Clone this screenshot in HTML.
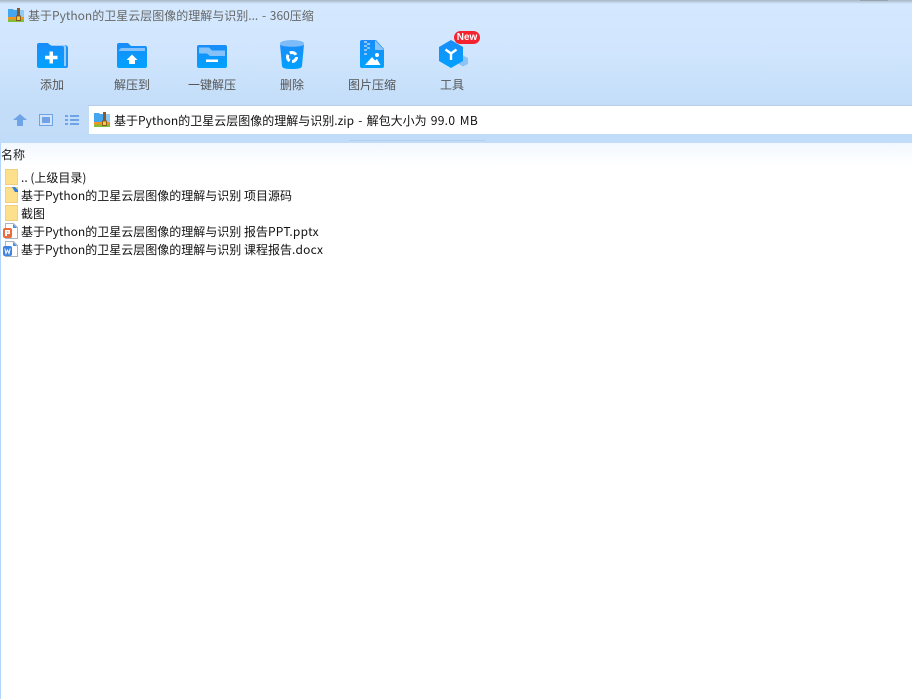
<!DOCTYPE html>
<html lang="zh"><head><meta charset="utf-8"><title>360压缩</title>
<style>
html,body{margin:0;padding:0;background:#fff}
body{width:912px;height:699px;position:relative;overflow:hidden;font:12px/16px "Noto Sans CJK SC","Liberation Sans",sans-serif;color:#111}
.a{position:absolute;white-space:nowrap}
.lbl{position:absolute;top:77px;width:80px;text-align:center;color:#555;line-height:16px}
svg{position:absolute;overflow:visible}
.row{position:absolute;left:21px;white-space:nowrap;line-height:18px}
</style></head><body>
<div class="a" style="left:0;top:0;width:912px;height:143px;background:linear-gradient(#d4e9ff 0,#d1e6fe 50px,#c3ddf8 105px)"></div>
<div class="a" style="left:0;top:0;width:912px;height:4px;background:linear-gradient(#a8b6c4,#d4e9ff)"></div>
<div class="a" style="left:860px;top:0;width:28px;height:1px;background:#98a5b1"></div>
<div class="a" style="left:0;top:134px;width:912px;height:9px;background:#c1dcf8"></div>
<div class="a" style="left:349px;top:140px;width:136px;height:1px;background:#b4cfeb"></div>
<div class="a" style="left:88px;top:105px;width:824px;height:1px;background:#b5cfe9"></div>
<div class="a" style="left:89px;top:106px;width:823px;height:28px;background:#fff"></div>
<div class="a" style="left:1px;top:143px;width:911px;height:24px;background:linear-gradient(#f2f8ff,#fff)"></div>
<div class="a" style="left:0;top:143px;width:1px;height:556px;background:#b5d6fb"></div>

<svg style="left:8px;top:8px" width="16" height="14" viewBox="0 0 16 14"><path d="M0 1h5l1 1h5v7H0z" fill="#45a6f0"/><path d="M11 2h5v7h-5z" fill="#8fcaf5"/><path d="M0 9h16v2.500H0z" fill="#f39420"/><path d="M0 11.500h16V14H0z" fill="#84bd3c"/><path d="M9 0h3v13H9z" fill="#8a5a2a"/><rect x="8.500" y="8" width="4" height="4.500" fill="#f5c940" stroke="#7a4a1a" stroke-width=".8"/></svg>
<div class="a" style="left:28px;top:8px;color:#666;line-height:16px;word-spacing:1px">基于Python的卫星云层图像的理解与识别... - 360压缩</div>

<svg style="left:37px;top:43px" width="31" height="25" viewBox="0 0 31 25"><defs><linearGradient id="g" x1="0" y1="0" x2="0" y2="1"><stop offset="0" stop-color="#1a8cfa"/><stop offset="1" stop-color="#00a2ff"/></linearGradient></defs><path d="M12 2h16a3 3 0 0 1 3 3v18a2 2 0 0 1-2 2h-5z" fill="#1a94fb"/><path d="M14 2h13a2 2 0 0 1 2 2v19h-2V4H14z" fill="#9ccdfa"/><path d="M2 0h9l3 3h11a2 2 0 0 1 2 2v18a2 2 0 0 1-2 2H2a2 2 0 0 1-2-2V2a2 2 0 0 1 2-2z" fill="url(#g)"/><path d="M12.500 8.500h3.500v4.300h4.500v3.400H16v4.300h-3.500v-4.300H8v-3.400h4.500z" fill="#fff"/></svg>
<div class="lbl" style="left:12px">添加</div>

<svg style="left:117px;top:43px" width="30" height="25" viewBox="0 0 30 25"><path d="M2 0h9l3 3h14a2 2 0 0 1 2 2v18a2 2 0 0 1-2 2H2a2 2 0 0 1-2-2V2a2 2 0 0 1 2-2z" fill="url(#g)"/><path d="M2 8a3 3 0 0 1 3-3h23v3z" fill="#86c2fa"/><path d="M15 11.500l5.500 5.500H18v4h-6v-4H9.500z" fill="#fff"/></svg>
<div class="lbl" style="left:92px">解压到</div>

<svg style="left:197px;top:45px" width="30" height="23" viewBox="0 0 30 23"><path d="M2 0h26a2 2 0 0 1 2 2v19a2 2 0 0 1-2 2H2a2 2 0 0 1-2-2V2a2 2 0 0 1 2-2z" fill="url(#g)"/><path d="M2 2.500h10l3 3h13V11H13L10 8.500H2z" fill="#86c2fa"/><path d="M9 14.500h12v2.500H9z" fill="#fff"/></svg>
<div class="lbl" style="left:172px">一键解压</div>

<svg style="left:280px;top:40px" width="24" height="29" viewBox="0 0 24 29"><ellipse cx="12" cy="3.500" rx="12" ry="3.500" fill="#7dbcf8"/><path d="M0 4.500c3 3 21 3 24 0l-2 21.500c-.2 2-3 3-10 3s-9.800-1-10-3z" fill="url(#g)"/><circle cx="12" cy="17" r="4.500" fill="none" stroke="#fff" stroke-width="3" stroke-dasharray="7 2.400"/></svg>
<div class="lbl" style="left:252px">删除</div>

<svg style="left:360px;top:40px" width="24" height="28" viewBox="0 0 24 28"><path d="M2 0h14l8 9v17a2 2 0 0 1-2 2H2a2 2 0 0 1-2-2V2a2 2 0 0 1 2-2z" fill="url(#g)"/><path d="M15 0l9 10h-9z" fill="#8cc4f8"/><path d="M4 1h3v2H4zM7 3h3v2H7zM4 5h3v2H4zM7 7h3v2H7zM4 9h3v2H4zM4 13h3v2H4z" fill="#8cc4f8"/><circle cx="17" cy="15" r="2" fill="#fff"/><path d="M5 25l7-8 3 3.500 2-1.500 3.500 6z" fill="#fff"/></svg>
<div class="lbl" style="left:332px">图片压缩</div>

<svg style="left:439px;top:40px" width="29" height="28" viewBox="0 0 29 28"><path d="M23 15l6 3v6l-5 2.500-5-3z" fill="#8cc4f8"/><path d="M12 0L24 7v14l-12 7L0 21V7z" fill="url(#g)"/><path d="M6.500 9.500l5.500 4 5.500-4M12 13.500V20" fill="none" stroke="#fff" stroke-width="2.400"/></svg>
<div class="a" style="left:454px;top:31px;width:26px;height:13px;border-radius:7px;background:#f5222f;color:#fff;font:bold 10px/13px 'Liberation Sans',sans-serif;text-align:center">New</div>
<div class="lbl" style="left:412px">工具</div>

<svg style="left:13px;top:114px" width="14" height="12" viewBox="0 0 14 12"><path d="M7 0l7 6h-4v6H4V6H0z" fill="#6ea4e6"/></svg>
<svg style="left:39px;top:114px" width="14" height="12" viewBox="0 0 14 12"><rect x=".5" y=".5" width="13" height="11" fill="#d2e4f9" stroke="#6ea4e6"/><rect x="3" y="3" width="8" height="6" fill="#6ea4e6"/></svg>
<svg style="left:65px;top:115px" width="14" height="10" viewBox="0 0 14 10"><path d="M0 0h3v2H0zM5 0h9v2H5zM0 4h3v2H0zM5 4h9v2H5zM0 8h3v2H0zM5 8h9v2H5z" fill="#6ea4e6"/></svg>

<svg style="left:94px;top:112px" width="16" height="15" viewBox="0 0 16 15"><path d="M0 1h5l1 1h5v8H0z" fill="#45a6f0"/><path d="M11 2h5v8h-5z" fill="#8fcaf5"/><path d="M0 10h16v2.500H0z" fill="#f39420"/><path d="M0 12.500h16V15H0z" fill="#84bd3c"/><path d="M9 0h3v14H9z" fill="#8a5a2a"/><rect x="8.500" y="9" width="4" height="4.500" fill="#f5c940" stroke="#7a4a1a" stroke-width=".8"/></svg>
<div class="a" style="left:114px;top:113px;color:#111;line-height:16px;word-spacing:1.500px">基于Python的卫星云层图像的理解与识别.zip - 解包大小为 <span style="letter-spacing:.3px">99.0 MB</span></div>

<div class="a" style="left:1px;top:147px;line-height:16px;color:#222">名称</div>

<svg style="left:5px;top:169px" width="13" height="16" viewBox="0 0 13 16"><rect x=".5" y=".5" width="12" height="15" fill="#fde08c" stroke="#f2cf80"/></svg>
<div class="row" style="top:169px">.. (上级目录)</div>
<svg style="left:5px;top:187px" width="13" height="16" viewBox="0 0 13 16"><rect x=".5" y=".5" width="12" height="15" fill="#fde08c" stroke="#f2cf80"/><path d="M7 0h3l3 3v2h-3z" fill="#2f80d8"/></svg>
<div class="row" style="top:187px">基于Python的卫星云层图像的理解与识别 项目源码</div>
<svg style="left:5px;top:205px" width="13" height="16" viewBox="0 0 13 16"><rect x=".5" y=".5" width="12" height="15" fill="#fde08c" stroke="#f2cf80"/></svg>
<div class="row" style="top:205px">截图</div>
<svg style="left:2px;top:223px" width="16" height="16" viewBox="0 0 16 16"><path d="M3.500.5h8l4 4v11h-12z" fill="#fff" stroke="#a9b4c2"/><path d="M11 1l4 4h-4z" fill="#4a90e0"/><rect x="1" y="5" width="9" height="10" rx="2" fill="#ec6a3c"/><path d="M3 7h5v4H5v2H3zM5 8.500v1h1.500v-1z" fill="#fff"/></svg>
<div class="row" style="top:223px">基于Python的卫星云层图像的理解与识别 报告<span style="letter-spacing:.25px">PPT.pptx</span></div>
<svg style="left:2px;top:241px" width="16" height="16" viewBox="0 0 16 16"><path d="M3.500.5h8l4 4v11h-12z" fill="#fff" stroke="#a9b4c2"/><path d="M11 1l4 4h-4z" fill="#4a90e0"/><rect x="1" y="5" width="9" height="10" rx="2" fill="#3f82e0"/><path d="M2.800 7.500l1.200 5 1.500-3.500 1.500 3.500 1.200-5" fill="none" stroke="#fff"/></svg>
<div class="row" style="top:241px">基于Python的卫星云层图像的理解与识别 课程报告<span style="letter-spacing:.2px">.docx</span></div>
</body></html>
